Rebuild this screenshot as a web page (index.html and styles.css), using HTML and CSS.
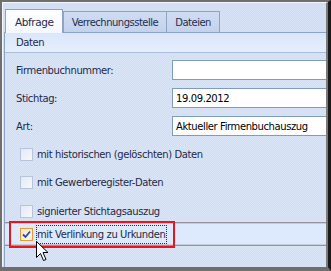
FILE: index.html
```html
<!DOCTYPE html>
<html lang="de">
<head>
  <meta charset="UTF-8" />
  <title>Abfrage</title>
  <link rel="stylesheet" href="styles.css">
</head>
<body>
  <div class="window">
    <div class="inner">
      <div class="tabs">
        <div class="tab active">Abfrage</div>
        <div class="tab">Verrechnungsstelle</div>
        <div class="tab">Dateien</div>
      </div>

      <div class="panel">
        <div class="group-head">Daten</div>

        <div class="fields">
          <div class="field">
            <label>Firmenbuchnummer:</label>
            <div class="input"></div>
          </div>
          <div class="field">
            <label>Stichtag:</label>
            <div class="input">19.09.2012</div>
          </div>
          <div class="field">
            <label>Art:</label>
            <div class="input">Aktueller Firmenbuchauszug</div>
          </div>
        </div>

        <div class="checks">
          <div class="check row1"><span class="box"></span>mit historischen (gelöschten) Daten</div>
          <div class="check row2"><span class="box"></span>mit Gewerberegister-Daten</div>
          <div class="check row3"><span class="box"></span>signierter Stichtagsauszug</div>
          <div class="check selected">
            <span class="box checked">
              <svg width="9" height="9" viewBox="0 0 9 9">
                <path d="M1 4.5 L3.5 7 L8 1.5" fill="none" stroke="#2148b4" stroke-width="1.8" />
              </svg>
            </span>
            <span class="focus">mit Verlinkung zu Urkunden</span>
          </div>
        </div>
      </div>
    </div>

    <div class="marker"></div>

    <svg class="cursor" width="13" height="22" viewBox="0 0 13 22">
      <path d="M0.5 0.5 L0.5 16.5 L4.5 12.5 L7.5 19.5 L10 18.5 L7 11.5 L12 11.5 Z" fill="#fff" stroke="#000" stroke-width="1" />
    </svg>
  </div>
</body>
</html>
```

FILE: styles.css
```css
body {
  margin: 0;
  font-family: 'DejaVu Sans', sans-serif;
  font-size: 10px;
  letter-spacing: -0.4px;
  color: #1d2a48;
}

.window {
  position: relative;
  width: 331px;
  height: 271px;
  box-sizing: border-box;
  border: 2px solid #6f6f6f;
  border-right: 3px solid #1a1a1a;
  border-bottom: 4px solid #6f6f6f;
  overflow: hidden;
}

.inner {
  height: 100%;
  display: flex;
  flex-direction: column;
  border-left: 1px solid #f4f6fb;
  border-top: 1px solid #f4f6fb;
  border-right: 2px solid #7a7a7a;
  background: repeating-conic-gradient(#d2dcf1 0 25%, #d8e2f6 0 50%) 0 0 / 2px 2px;
}

.tabs {
  display: flex;
  align-items: flex-end;
  height: 29px;
  padding-left: 2px;
}

.tab {
  height: 20px;
  padding: 0 8px;
  display: flex;
  align-items: center;
  border: 1px solid #8da4c8;
  border-bottom: none;
  background: linear-gradient(#d0dcf1, #c3d2ec);
  color: #1f2d4d;
  margin-left: -1px;
  letter-spacing: -0.5px;
}

.tab.active {
  position: relative;
  z-index: 1;
  height: 23px;
  padding: 0 8px 0 9px;
  margin-left: 0;
  margin-bottom: -1px;
  background: linear-gradient(#fdfeff, #f4f7fd);
  border-color: #8ca3c7;
  font-size: 10.5px;
  letter-spacing: -0.4px;
  margin-right: 1px;
}

.panel {
  flex: 1;
  margin-left: 1px;
  border-top: 1px solid #8ca3c7;
  border-left: 1px solid #8ca3c7;
  background: repeating-conic-gradient(#d4def3 0 25%, #dae4f7 0 50%) 0 0 / 2px 2px;
}

.group-head {
  height: 19px;
  display: flex;
  align-items: center;
  padding-left: 11px;
  background: linear-gradient(#dbe6fa, #e4eefd);
  border-bottom: 1px solid #a9bddb;
}

.fields {
  display: flex;
  flex-direction: column;
  gap: 8px;
  padding-top: 7px;
}

.field {
  display: flex;
  align-items: center;
  height: 20px;
  padding-left: 11px;
}

.field label {
  width: 156px;
}

.input {
  flex: 1;
  height: 20px;
  box-sizing: border-box;
  border: 1px solid #7f9db9;
  border-right: none;
  background: #fff;
  color: #000;
  padding-left: 3px;
  display: flex;
  align-items: center;
}

.checks {
  display: flex;
  flex-direction: column;
  padding-top: 5px;
}

.check {
  display: flex;
  align-items: center;
  padding-left: 15px;
  height: 28px;
  box-sizing: border-box;
}

.check.row1 {
  height: 27px;
}

.check.row3 {
  height: 26px;
  padding-top: 4px;
}

.box {
  width: 11px;
  height: 11px;
  border: 1px solid #b6c4dc;
  background: linear-gradient(135deg, #e4e9f2, #f6f8fb);
  margin-right: 4px;
  display: flex;
  align-items: center;
  justify-content: center;
}

.box.checked {
  border-color: #e49a3c;
  background: linear-gradient(135deg, #fde7c4, #fff6e6);
}

.check.selected {
  height: 24px;
  border-top: 1px solid #95949f;
  border-bottom: 1px solid #95949f;
  box-shadow: inset 0 1px #c6cbd6, inset 0 -1px #c6cbd6;
  background: #dde9fc;
}

.focus {
  border: 1px dotted #333;
  padding: 3px 1px 3px 0;
  margin-left: -1px;
}

.marker {
  position: absolute;
  left: 7px;
  top: 219px;
  width: 162px;
  height: 23px;
  border: 2px solid #e8161c;
}

.cursor {
  position: absolute;
  left: 34px;
  top: 239px;
}
```
